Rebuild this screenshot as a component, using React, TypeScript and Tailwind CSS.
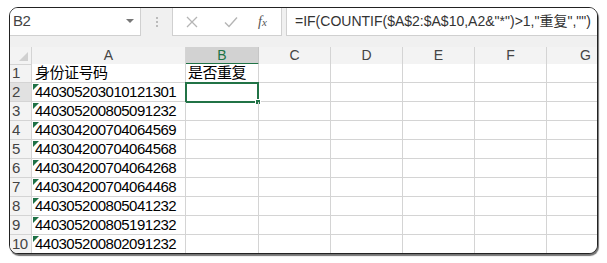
import React from "react";

const ids = [
  "440305203010121301",
  "440305200805091232",
  "440304200704064569",
  "440304200704064568",
  "440304200704064268",
  "440304200704064468",
  "440305200805041232",
  "440305200805191232",
  "440305200802091232",
];

const font = { fontFamily: '"Liberation Sans", "Noto Sans CJK SC", sans-serif' };

const cols = "grid grid-cols-[22px_154px_73px_72px_72px_72px_72px_1fr]";

function Tri() {
  return (
    <svg className="absolute left-[1px] top-[1px]" width="6" height="6" viewBox="0 0 6 6">
      <polygon points="0,0 6,0 0,6" fill="#1e7145" />
    </svg>
  );
}

function Row({ n, a, b, selB }: { n: number; a: string; b?: string; selB?: boolean }) {
  return (
    <div className={`${cols} h-[19px]`}>
      <div className={`border-r border-b border-[#d4d4d4] ${n === 2 ? "bg-[#e1e1e1]" : "bg-[#f3f3f3]"} text-[15px] leading-[18px] text-[#444] pl-[2px] tracking-[-0.5px] whitespace-nowrap`}>
        {n}
      </div>
      <div className="relative border-r border-b border-[#d4d4d4] text-[15px] leading-[18px] text-black pl-[3px] tracking-[-0.5px] whitespace-nowrap">
        {n > 1 && <Tri />}
        {a}
      </div>
      <div className="relative border-r border-b border-[#d4d4d4] text-[15px] leading-[18px] text-black pl-[2px] tracking-[-0.5px] whitespace-nowrap">
        {b}
        {selB && (
          <div className="absolute left-[-1px] top-[-1px] w-[74px] h-[21px] border-2 border-[#217346]">
            <div className="absolute right-[-4px] bottom-[-4px] w-[6px] h-[6px] bg-[#217346] border border-white" />
          </div>
        )}
      </div>
      <div className="border-r border-b border-[#d4d4d4]" />
      <div className="border-r border-b border-[#d4d4d4]" />
      <div className="border-r border-b border-[#d4d4d4]" />
      <div className="border-r border-b border-[#d4d4d4]" />
      <div className="border-b border-[#d4d4d4]" />
    </div>
  );
}

export default function App() {
  return (
    <div className="w-[607px] h-[263px] bg-white pl-[9px] pt-[7px]" style={font}>
      <div className="w-[589px] h-[247px] border border-[#222] rounded-[9px] overflow-hidden shadow-[1px_2px_1px_rgba(0,0,0,0.55)] bg-[#f0f0f0] flex flex-col">
        {/* formula bar */}
        <div className="h-[28px] flex items-stretch shrink-0">
          <div className="w-[131px] bg-white border-r border-b border-[#d0d0d0] flex items-center justify-between pl-[3px] pr-[6px]">
            <span className="text-[15px] text-[#444] tracking-[-0.5px]">B2</span>
            <svg width="8" height="5" viewBox="0 0 8 5">
              <polygon points="0,0 8,0 4,4" fill="#777" />
            </svg>
          </div>
          <div className="w-[31px] flex items-center justify-center">
            <div className="flex flex-col gap-[2px]">
              <div className="w-[2px] h-[2px] bg-[#bbb]" />
              <div className="w-[2px] h-[2px] bg-[#bbb]" />
              <div className="w-[2px] h-[2px] bg-[#bbb]" />
            </div>
          </div>
          <div className="w-[110px] bg-white border border-t-0 border-[#d0d0d0] flex items-center pl-[13px]">
            <svg width="12" height="12" viewBox="0 0 12 12" className="mr-[26px]">
              <path d="M1 1 L11 11 M11 1 L1 11" stroke="#b5b5b5" strokeWidth="1.3" />
            </svg>
            <svg width="14" height="12" viewBox="0 0 14 12" className="mr-[20px]">
              <path d="M1 6.5 L5 10.5 L13 1.5" stroke="#b5b5b5" strokeWidth="1.4" fill="none" />
            </svg>
            <span className="text-[14px] italic text-[#555]" style={{ fontFamily: '"Liberation Serif", serif' }}>
              f<span className="text-[11px]">x</span>
            </span>
          </div>
          <div className="w-[4px]" />
          <div className="flex-1 bg-white border-l border-b border-[#d0d0d0] flex items-center pl-[8px] whitespace-nowrap overflow-hidden">
            <span className="text-[14px] text-[#333]">
              =IF(COUNTIF($A$2:$A$10,A2&amp;"*")&gt;1,"重复","")
            </span>
          </div>
        </div>
        <div className="h-[11px] shrink-0" />
        {/* column headers */}
        <div className={`${cols} h-[17px] bg-[#f3f3f3] text-[14px] text-[#444] leading-[16px] text-center`}>
          <div className="relative border-r border-b border-[#d4d4d4]">
            <svg className="absolute right-[3px] bottom-[3px]" width="9" height="9" viewBox="0 0 9 9">
              <polygon points="9,0 9,9 0,9" fill="#d0d0d0" />
            </svg>
          </div>
          <div className="border-r border-b border-[#d4d4d4]">A</div>
          <div className="bg-[#d2d2d2] border-r border-[#c6c6c6] border-b-2 border-b-[#217346] text-[#217346]">B</div>
          <div className="border-r border-b border-[#d4d4d4]">C</div>
          <div className="border-r border-b border-[#d4d4d4]">D</div>
          <div className="border-r border-b border-[#d4d4d4]">E</div>
          <div className="border-r border-b border-[#d4d4d4]">F</div>
          <div className="border-b border-[#d4d4d4] text-right pr-[6px]">G</div>
        </div>
        <div className="bg-white flex-1">
          <Row n={1} a="身份证号码" b="是否重复" />
          {ids.map((id, i) => (
            <Row key={i} n={i + 2} a={id} selB={i === 0} />
          ))}
        </div>
      </div>
    </div>
  );
}
